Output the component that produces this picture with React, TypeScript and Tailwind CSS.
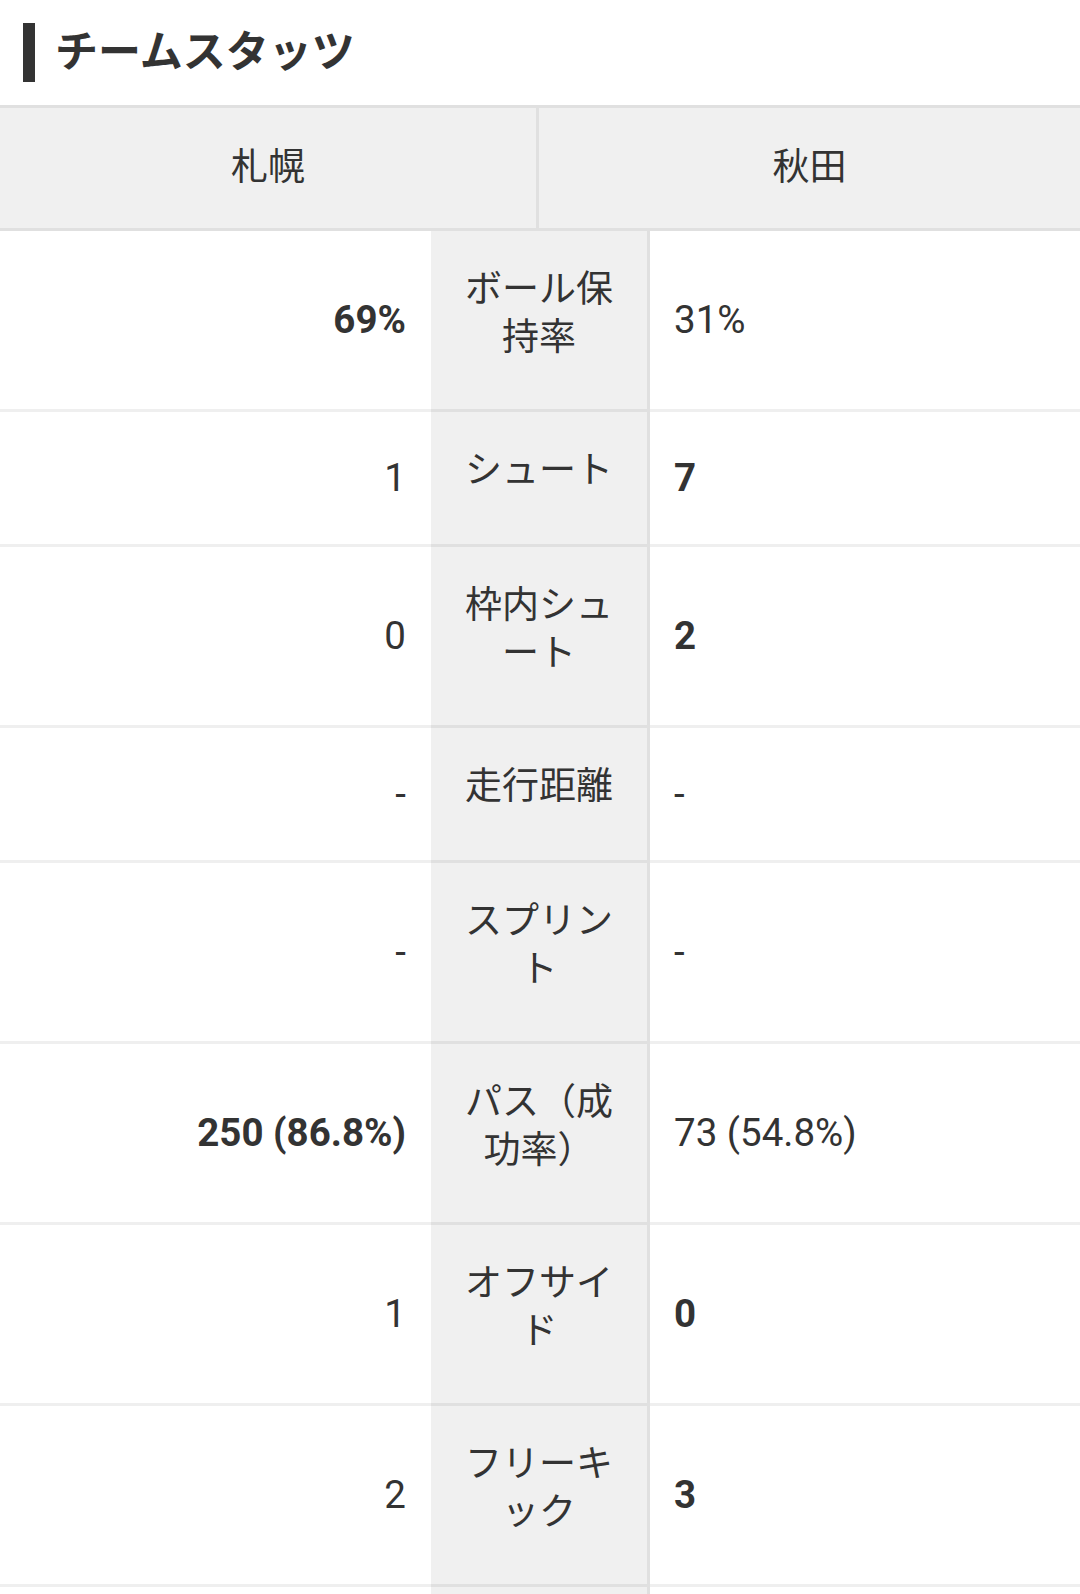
import React from "react";

type Row = { label: string; left: string; right: string; lb?: boolean; rb?: boolean };

const rows: Row[] = [
  { label: "ボール保持率", left: "69%", right: "31%", lb: true },
  { label: "シュート", left: "1", right: "7", rb: true },
  { label: "枠内シュート", left: "0", right: "2", rb: true },
  { label: "走行距離", left: "-", right: "-" },
  { label: "スプリント", left: "-", right: "-" },
  { label: "パス（成功率）", left: "250 (86.8%)", right: "73 (54.8%)", lb: true },
  { label: "オフサイド", left: "1", right: "0", rb: true },
  { label: "フリーキック", left: "2", right: "3", rb: true },
  { label: "コーナーキック", left: "3", right: "4", rb: true },
];

export default function App() {
  return (
    <div
      lang="ja"
      className="w-[1080px] bg-white text-[#333]"
      style={{ fontFamily: "Roboto, 'Noto Sans CJK JP', sans-serif" }}
    >
      <div className="flex h-[105px] items-center gap-[20px] pl-[23px]">
        <div className="h-[59px] w-[12px] bg-[#333]" />
        <h2 className="text-[43px] font-bold leading-none">チームスタッツ</h2>
      </div>

      <div className="flex h-[126px] border-y-[3px] border-[#e0e0e0] bg-[#f0f0f0] text-[37px]">
        <div className="flex w-[539px] items-center justify-center border-r-[3px] border-[#e0e0e0]">札幌</div>
        <div className="flex flex-1 items-center justify-center">秋田</div>
      </div>

      {rows.map((r, i) => (
        <div key={i} className="grid min-h-[135px] grid-cols-[431px_219px_1fr]">
          <div
            className={
              "flex items-center justify-end border-b-[3px] border-[#efefef] pr-[25px] text-[38.5px] " +
              (r.lb ? "font-bold" : "font-normal")
            }
          >
            {r.left}
          </div>
          <div className="border-b-[3px] border-r-[3px] border-[#e0e0e0] bg-[#f0f0f0] px-[22px] pt-[35px] pb-[47px] text-center text-[37px] leading-[48px] [line-break:loose]">
            {r.label}
          </div>
          <div
            className={
              "flex items-center justify-start border-b-[3px] border-[#efefef] pl-[24px] text-[38.5px] " +
              (r.rb ? "font-bold" : "font-normal")
            }
          >
            {r.right}
          </div>
        </div>
      ))}
    </div>
  );
}
